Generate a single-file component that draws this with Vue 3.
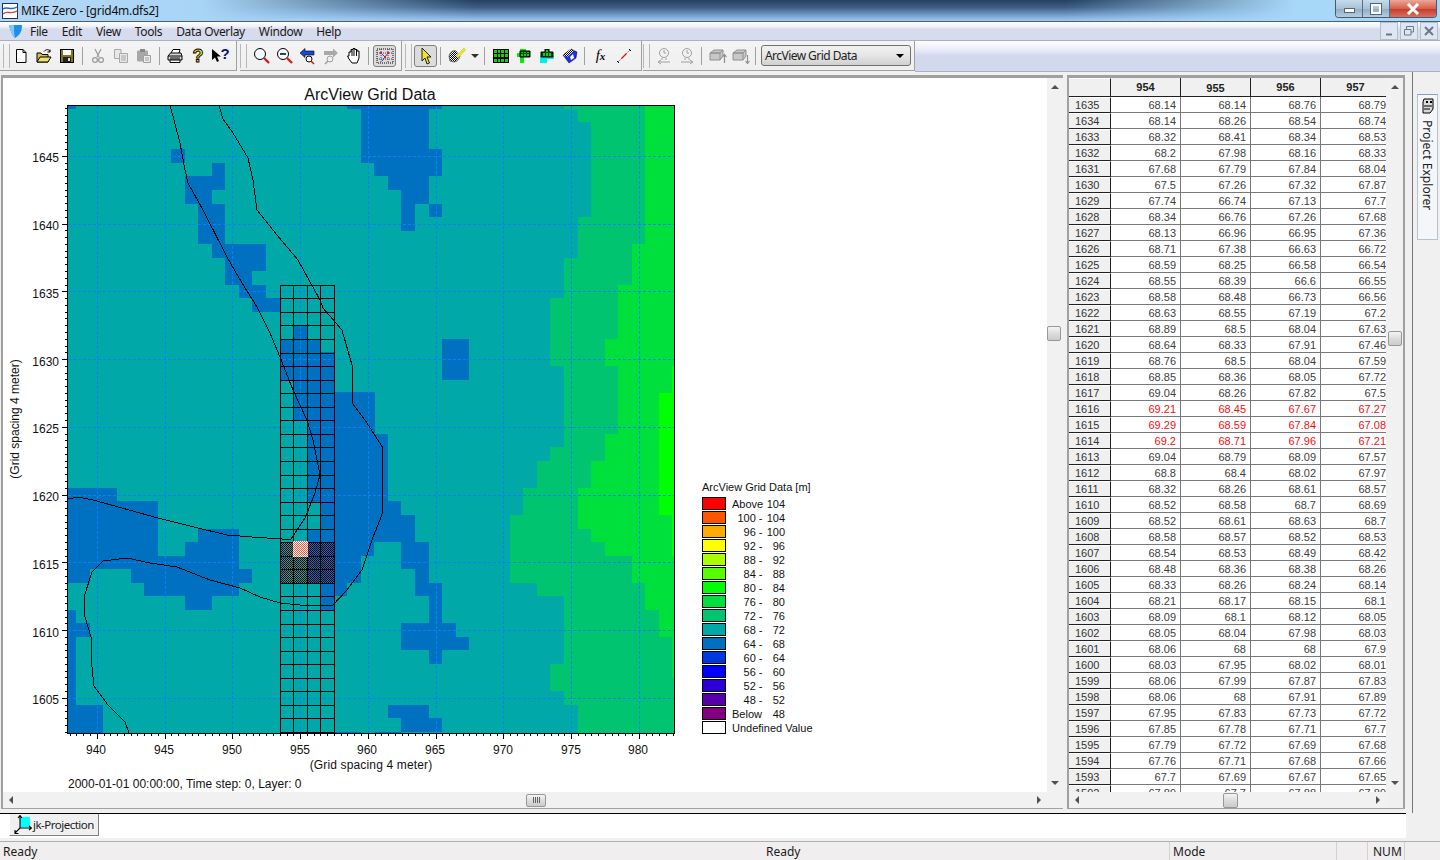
<template>
  <div class="app">
    <div class="titlebar">
      <svg class="app-icon" width="16" height="16" viewBox="0 0 16 16">
        <rect x="0.5" y="0.5" width="15" height="15" fill="#fff" stroke="#1c2f7a" />
        <path d="M1 6 C5 3 9 8 15 4" fill="none" stroke="#2a62c8" stroke-width="1.4" />
        <path d="M1 11 C5 7 9 12 15 8" fill="none" stroke="#d8442c" stroke-width="1.4" />
      </svg>
      <span class="title-text">MIKE Zero - [grid4m.dfs2]</span>
      <div class="win-btns">
        <div class="win-btn"><i class="min-glyph"></i></div>
        <div class="win-btn"><i class="max-glyph"></i></div>
        <div class="win-btn close">
          <svg width="14" height="12" viewBox="0 0 14 12"><path d="M2 1 L12 11 M12 1 L2 11" stroke="#fff" stroke-width="3" /></svg>
        </div>
      </div>
    </div>

    <div class="menubar">
      <svg class="menu-logo" width="15" height="14" viewBox="0 0 15 14">
        <path d="M1 1 L14 1 C14 7 12 11 7 14 C4 11 2 6 1 1 Z" fill="#1f8fe8" />
        <path d="M1 1 L6 1 C6 6 6 10 7 14 C4 11 2 6 1 1 Z" fill="#7fc8f8" />
      </svg>
      <span v-for="m in menus" :key="m" class="menu-item">{{ m }}</span>
      <div class="mdi-btns">
        <div class="mdi-btn"><svg width="10" height="10" viewBox="0 0 10 10"><path d="M2 8.5 H8" stroke="#66788c" stroke-width="2" /></svg></div>
        <div class="mdi-btn"><svg width="12" height="10" viewBox="0 0 12 10"><path d="M3.5 3 V0.5 H10.5 V6 H8 M1.5 3.5 H8 V9 H1.5 Z" fill="none" stroke="#66788c" /></svg></div>
        <div class="mdi-btn"><svg width="10" height="10" viewBox="0 0 10 10"><path d="M1 1 L9 9 M9 1 L1 9" stroke="#66788c" stroke-width="2" /></svg></div>
      </div>
    </div>

    <div class="toolbar">
      <div class="band band1">
        <i class="grip"></i>
        <div class="tb">
          <svg width="16" height="16" viewBox="0 0 16 16"><path d="M3.5 1.5 H10 L13 4.5 V14.5 H3.5 Z" fill="#fff" stroke="#000" /><path d="M10 1.5 V4.5 H13" fill="none" stroke="#000" /></svg>
        </div>
        <div class="tb">
          <svg width="16" height="16" viewBox="0 0 16 16"><path d="M1 5 H5 L6 6.5 H12 V14 H1 Z" fill="#d8c040" stroke="#000" /><path d="M1 14 L4 9 H15 L12 14 Z" fill="#f0e070" stroke="#000" /><path d="M8 3.5 C10 1 13 1 14 3.5 M14 1.5 V4 H11.5" fill="none" stroke="#000" /></svg>
        </div>
        <div class="tb">
          <svg width="16" height="16" viewBox="0 0 16 16"><rect x="1.5" y="1.5" width="13" height="13" fill="#807820" stroke="#000" /><rect x="4" y="2" width="8" height="5" fill="#fff" /><rect x="4" y="9" width="8" height="5" fill="#222" /><rect x="9" y="10" width="2" height="3" fill="#d8d8d8" /></svg>
        </div>
        <i class="sep"></i>
        <div class="tb">
          <svg width="16" height="16" viewBox="0 0 16 16"><path d="M5 1 L9 9 M11 1 L7 9" stroke="#9a9a9a" stroke-width="1.2" fill="none" /><circle cx="5" cy="12" r="2.4" fill="none" stroke="#9a9a9a" stroke-width="1.2" /><circle cx="11" cy="12" r="2.4" fill="none" stroke="#9a9a9a" stroke-width="1.2" /></svg>
        </div>
        <div class="tb">
          <svg width="16" height="16" viewBox="0 0 16 16"><path d="M1.5 1.5 H8 V10.5 H1.5 Z" fill="#e8e8e8" stroke="#a8a8a8" /><path d="M6.5 5.5 H14.5 V14.5 H6.5 Z" fill="#e8e8e8" stroke="#a8a8a8" /><path d="M8 8 H13 M8 10 H13 M8 12 H13" stroke="#a8a8a8" /></svg>
        </div>
        <div class="tb">
          <svg width="16" height="16" viewBox="0 0 16 16"><rect x="1" y="2.5" width="11" height="11" rx="1" fill="#a8a8a8" /><rect x="4" y="1" width="5" height="3" fill="#888" /><path d="M7.5 7.5 H14.5 V14.5 H7.5 Z" fill="#ececec" stroke="#a0a0a0" /><path d="M9 10 H13 M9 12 H13" stroke="#a0a0a0" /></svg>
        </div>
        <i class="sep"></i>
        <div class="tb">
          <svg width="16" height="16" viewBox="0 0 16 16"><path d="M4 5 L6 1.5 H13 L12 5" fill="#fff" stroke="#000" /><path d="M1 8 L3.5 5 H14 L15 8 V12 H1 Z" fill="#d8d8d8" stroke="#000" /><path d="M1 8 H15 M3 10 H13" stroke="#000" /><path d="M3 12 H13 V14.5 H3 Z" fill="#fff" stroke="#000" /></svg>
        </div>
        <div class="tb">
          <svg width="16" height="18" viewBox="0 0 16 18"><text x="8" y="15" text-anchor="middle" class="q-yellow">?</text></svg>
        </div>
        <div class="tb">
          <svg width="20" height="17" viewBox="0 0 20 17"><path d="M1 2 V13 L4 10.5 L6 15 L8 14 L6 9.5 H10 Z" fill="#000" /><text x="14" y="12" text-anchor="middle" class="q-navy">?</text></svg>
        </div>
      </div>

      <div class="band band2">
        <i class="grip"></i>
        <div class="tb">
          <svg width="18" height="18" viewBox="0 0 18 18"><circle cx="7" cy="7" r="5.5" fill="#f4fbff" stroke="#000" /><path d="M11 11 L16 16" stroke="#d02020" stroke-width="2.4" /></svg>
        </div>
        <div class="tb">
          <svg width="18" height="18" viewBox="0 0 18 18"><circle cx="7" cy="7" r="5.5" fill="#f4fbff" stroke="#000" /><path d="M4 7 H10" stroke="#000" stroke-width="1.5" /><path d="M11 11 L16 16" stroke="#d02020" stroke-width="2.4" /></svg>
        </div>
        <div class="tb">
          <svg width="18" height="18" viewBox="0 0 18 18"><path d="M1 6 L6 1.5 V4 H15 V8 H6 V10.5 Z" fill="#1848d8" stroke="#000" stroke-width="0.6" /><circle cx="10" cy="12" r="3" fill="#fff" stroke="#000" /><path d="M12 14 L15 17" stroke="#d02020" stroke-width="1.6" /></svg>
        </div>
        <div class="tb">
          <svg width="18" height="18" viewBox="0 0 18 18"><path d="M16 6 L11 1.5 V4 H2 V8 H11 V10.5 Z" fill="#a8a8a8" /><circle cx="8" cy="12" r="3" fill="#eee" stroke="#a0a0a0" /><path d="M6 14 L3 17" stroke="#a0a0a0" stroke-width="1.6" /></svg>
        </div>
        <div class="tb">
          <svg width="16" height="18" viewBox="0 0 16 18"><path d="M3 9 V5 H5 V2.5 H7 V1.5 H9 V2.5 H11 V4 H13 V11 L11 16 H6 L3 12 L1.5 9 Z" fill="#fff" stroke="#000" /><path d="M6 3 V9 M8 2 V9 M10.5 3 V9" stroke="#000" /></svg>
        </div>
        <i class="sep"></i>
        <div class="tb active">
          <svg width="18" height="16" viewBox="0 0 18 16"><rect x="1" y="1" width="16" height="14" fill="none" stroke="#000" stroke-dasharray="1 1" /><path d="M5 1 V15 M12 1 V15 M1 5 H17 M1 11 H17" stroke="#404040" stroke-dasharray="1 1" /><path d="M5 5 L9 9 L12 5 M9 9 L6 13" fill="none" stroke="#2040d0" /><path d="M4 4 h2 v2 h-2z M11 4 h2 v2 h-2z M8 8 h2 v2 h-2z" fill="#d82020" /></svg>
        </div>
      </div>

      <div class="band band3">
        <i class="grip"></i>
        <div class="tb active">
          <svg width="16" height="18" viewBox="0 0 16 18"><path d="M4 1 L13 10 H9 L11.5 16 L9 17 L7 11 L4 14 Z" fill="#f0e818" stroke="#202020" /></svg>
        </div>
        <i class="sep"></i>
        <div class="tb">
          <svg width="18" height="18" viewBox="0 0 18 18"><path d="M1 9 C2 5 5 3 8 4 L12 9 C11 13 8 15 6 15 L2 14 Z" fill="url(#dots)" stroke="#505050" stroke-width="0.8" /><path d="M8 9 L16 1 L17.5 3 L10 11 Z" fill="#f0e030" stroke="#c8c040" stroke-width="0.6" /></svg>
        </div>
        <div class="drop"><i class="caret"></i></div>
        <i class="sep"></i>
        <div class="tb">
          <svg width="16" height="14" viewBox="0 0 16 14"><rect width="16" height="14" fill="#000" /><path d="M1 1h3v3H1z M5 1h2v3H5z M8 1h3v3H8z M12 1h3v3h-3z M1 5h3v3H1z M5 5h2v3H5z M8 5h3v3H8z M12 5h3v3h-3z M1 10h3v3H1z M5 10h2v3H5z M8 10h3v3H8z M12 10h3v3h-3z" fill="#10d010" /></svg>
        </div>
        <div class="tb">
          <svg width="14" height="14" viewBox="0 0 14 14"><path d="M3 0 H9 V4 H0 V8 H3 V14 H7 V8 H3 Z" fill="#00f000" /><path d="M3 2 H13 V8 H3 Z" fill="#004800" stroke="#000" /><path d="M4 3 h2 v1 h-2z M7 3 h2 v1 h-2z M10 3 h2 v1 h-2z M4 5 h2 v2 h-2z M7 5 h2 v2 h-2z M10 5 h2 v2 h-2z" fill="#10c810" /></svg>
        </div>
        <div class="tb">
          <svg width="14" height="14" viewBox="0 0 14 14"><path d="M0 7 H14 V10 H7 V14 H0 Z" fill="#00f0f0" /><path d="M5 0 H9 V3 H13 V8 H1 V3 H5 Z" fill="#004800" stroke="#000" /><path d="M3 4 h2 v3 h-2z M6 1 h2 v2 h-2z M6 4 h2 v3 h-2z M9 4 h2 v3 h-2z" fill="#10c810" /></svg>
        </div>
        <div class="tb">
          <svg width="16" height="16" viewBox="0 0 16 16"><path d="M1 7 L9 1 L15 4 L14 10 L7 15 Z" fill="#2030e8" stroke="#000" stroke-width="0.5" /><path d="M1 7 L9 1 L12 3 L5 9 Z" fill="url(#dots)" /><path d="M8 9 L11 6 L12 10 L9 12 Z" fill="#fff" /></svg>
        </div>
        <i class="sep"></i>
        <div class="tb"><span class="fx"><i>f</i><i class="fx-x">x</i></span></div>
        <div class="tb">
          <svg width="16" height="16" viewBox="0 0 16 16"><path d="M2 14 L14 2" stroke="#404040" stroke-dasharray="1 1" /><path d="M5.5 10.5 L10.5 5.5" stroke="#e01010" stroke-width="1.2" /><path d="M1 13 L3 15 M13 1 L15 3" stroke="#000" /></svg>
        </div>
      </div>

      <div class="band band4">
        <i class="grip"></i>
        <div class="tb">
          <svg width="16" height="18" viewBox="0 0 16 18"><circle cx="8" cy="6" r="4.5" fill="none" stroke="#a0a0a0" /><path d="M8 3 V6 H10 M6 11 V13 M10 11 V13 M2 15 H14 M5 13 L2 15 L5 17" fill="none" stroke="#a0a0a0" /></svg>
        </div>
        <div class="tb">
          <svg width="16" height="18" viewBox="0 0 16 18"><circle cx="8" cy="6" r="4.5" fill="none" stroke="#a0a0a0" /><path d="M8 3 V6 H10 M6 11 V13 M10 11 V13 M2 15 H14 M11 13 L14 15 L11 17" fill="none" stroke="#a0a0a0" /></svg>
        </div>
        <i class="sep"></i>
        <div class="tb">
          <svg width="18" height="16" viewBox="0 0 18 16"><path d="M1 5 L5 2 H14 L11 5 Z M1 5 H11 V12 H1 Z M11 5 L14 2 V8 L11 12" fill="#c8c8c8" stroke="#909090" /><path d="M15.5 15 V7 M13.5 9 L15.5 6.5 L17.5 9" fill="none" stroke="#909090" stroke-width="1.2" /></svg>
        </div>
        <div class="tb">
          <svg width="18" height="16" viewBox="0 0 18 16"><path d="M1 5 L5 2 H14 L11 5 Z M1 5 H11 V12 H1 Z M11 5 L14 2 V8 L11 12" fill="#c8c8c8" stroke="#909090" /><path d="M15.5 7 V15 M13.5 13 L15.5 15.5 L17.5 13" fill="none" stroke="#909090" stroke-width="1.2" /></svg>
        </div>
        <i class="sep"></i>
        <div class="combo">
          <span>ArcView Grid Data</span>
          <i class="caret dark"></i>
        </div>
      </div>
      <div class="band-rest"></div>
    </div>

    <div class="workspace">
      <div class="pane left-pane">
        <div class="pane-top">
          <svg class="canvas" width="1044" height="714" viewBox="3 78 1044 714">
            <defs>
              <pattern id="dots" width="2" height="2" patternUnits="userSpaceOnUse">
                <rect width="2" height="2" fill="#fff" />
                <rect width="1" height="1" fill="#000" />
                <rect x="1" y="1" width="1" height="1" fill="#000" />
              </pattern>
              <pattern id="shadeTeal" width="2" height="2" patternUnits="userSpaceOnUse">
                <rect width="2" height="2" fill="#00a8a8" />
                <rect width="1" height="1" fill="#000" />
                <rect x="1" y="1" width="1" height="1" fill="#000" />
              </pattern>
              <pattern id="shadeBlue" width="2" height="2" patternUnits="userSpaceOnUse">
                <rect width="2" height="2" fill="#0070c0" />
                <rect width="1" height="1" fill="#000" />
                <rect x="1" y="1" width="1" height="1" fill="#000" />
              </pattern>
              <pattern id="shadeSel" width="2" height="2" patternUnits="userSpaceOnUse">
                <rect width="2" height="2" fill="#fff" />
                <rect width="1" height="1" fill="#f05a40" />
                <rect x="1" y="1" width="1" height="1" fill="#f05a40" />
              </pattern>
            </defs>

            <text x="370" y="100" class="chart-title" text-anchor="middle">ArcView Grid Data</text>

            <g shape-rendering="crispEdges">
              <rect x="68" y="105" width="607" height="628" fill="#00a8a8" />
              <rect v-for="(r, i) in blueCells" :key="'b' + i" :x="r[0]" :y="r[1]" :width="r[2] - r[0]" :height="r[3] - r[1]" fill="#0070c0" />
              <rect v-for="(s, i) in greenSteps" :key="'g' + i" :x="s[2]" :y="s[0]" :width="675 - s[2]" :height="s[1] - s[0]" fill="#00c470" />
              <rect v-for="(s, i) in brightSteps" :key="'h' + i" :x="s[2]" :y="s[0]" :width="675 - s[2]" :height="s[1] - s[0]" fill="#00e03c" />
              <rect v-for="(s, i) in limeSteps" :key="'l' + i" :x="s[2]" :y="s[0]" :width="675 - s[2]" :height="s[1] - s[0]" fill="#00ff00" />

              <line v-for="x in xMajor" :key="'dx' + x" :x1="x" :x2="x" y1="106" y2="733" class="dash" />
              <line v-for="y in yMajor" :key="'dy' + y" x1="68" x2="675" :y1="y" :y2="y" class="dash" />

              <rect x="281" y="542" width="26" height="42" fill="url(#shadeTeal)" />
              <rect x="307" y="542" width="28" height="42" fill="url(#shadeBlue)" />
              <rect x="293" y="541" width="15" height="16" fill="url(#shadeSel)" />

              <line v-for="x in gridCols" :key="'cx' + x" :x1="x" :x2="x" y1="285" y2="733" stroke="#000" />
              <line v-for="y in gridRows" :key="'cy' + y" x1="280" x2="335" :y1="y" :y2="y" stroke="#000" />
              <rect x="293" y="541" width="15" height="16" fill="url(#shadeSel)" />

              <rect x="67.5" y="105.5" width="607" height="628" fill="none" stroke="#000" />
              <line v-for="t in xTicks" :key="'tx' + t.p" :x1="t.p" :x2="t.p" y1="733" :y2="t.major ? 739 : 736" stroke="#000" />
              <line v-for="t in yTicks" :key="'ty' + t.p" :x2="68" :x1="t.major ? 62 : 65" :y1="t.p" :y2="t.p" stroke="#000" />

              <polyline :points="river1" class="river" />
              <polyline :points="river2" class="river" />
            </g>

            <text v-for="l in xLabels" :key="'xl' + l.v" :x="l.p" y="754" text-anchor="middle" class="axis">{{ l.v }}</text>
            <text v-for="l in yLabels" :key="'yl' + l.v" x="59" :y="l.p + 6" text-anchor="end" class="axis">{{ l.v }}</text>
            <text x="371" y="769" text-anchor="middle" class="axis wide">(Grid spacing 4 meter)</text>
            <text transform="translate(19 419) rotate(-90)" text-anchor="middle" class="axis">(Grid spacing 4 meter)</text>
            <text x="68" y="788" class="axis">2000-01-01 00:00:00, Time step: 0, Layer: 0</text>

            <text x="702" y="491" class="legend">ArcView Grid Data [m]</text>
            <g v-for="(l, i) in legend" :key="l.color">
              <rect x="702.5" :y="497.5 + i * 14" width="23" height="12" :fill="l.color" stroke="#000" />
              <text v-if="l.left" :x="l.anchor === 'end' ? 762.5 : 732" :y="508 + i * 14" :text-anchor="l.anchor" class="legend">{{ l.left }}</text>
              <text v-if="l.right" x="785" :y="508 + i * 14" text-anchor="end" class="legend">{{ l.right }}</text>
            </g>
            <text x="732" y="732" class="legend">Undefined Value</text>
          </svg>
          <div class="vscroll">
            <i class="arrow up"></i>
            <div class="vtrack left-vtrack"><i class="thumb vthumb"></i></div>
            <i class="arrow down"></i>
          </div>
        </div>
        <div class="hscroll left-h">
          <i class="arrow lt"></i>
          <div class="htrack left-htrack"><i class="thumb hthumb"></i></div>
          <i class="arrow rt"></i>
        </div>
      </div>

      <div class="pane right-pane">
        <div class="pane-top">
          <div class="sheet">
            <div class="row head">
              <div class="rowhead corner"></div>
              <div v-for="c in columns" :key="c" class="cell colhead" :class="{ low: c === 955 }">{{ c }}</div>
            </div>
            <div v-for="r in rows" :key="r.id" class="row" :class="{ picked: r.picked }">
              <div class="rowhead">{{ r.id }}</div>
              <div v-for="(v, i) in r.vals" :key="i" class="cell">{{ v }}</div>
            </div>
          </div>
          <div class="vscroll right-v">
            <i class="arrow up"></i>
            <div class="vtrack right-vtrack"><i class="thumb vthumb"></i></div>
            <i class="arrow down"></i>
          </div>
        </div>
        <div class="hscroll right-h">
          <i class="arrow lt"></i>
          <div class="htrack right-htrack"><i class="thumb hthumb tall"></i></div>
          <i class="arrow rt"></i>
        </div>
      </div>

      <div class="side">
        <div class="side-tab">
          <svg width="14" height="16" viewBox="0 0 14 16"><path d="M3 1 H12 V11 L9 15 H2 V4 Z" fill="#d8d8d8" stroke="#000" /><rect x="5" y="3" width="2" height="2" fill="#000" /><rect x="9" y="3" width="2" height="2" fill="#000" /><path d="M3 8 H11 M3 11 H9" stroke="#000" /></svg>
          <span class="side-text">Project Explorer</span>
        </div>
      </div>
    </div>

    <div class="tabbar">
      <div class="doc-tab">
        <svg width="18" height="20" viewBox="0 0 18 20">
          <rect x="6" y="2" width="10" height="10" fill="#00ffff" />
          <path d="M6 1 V13 M4 3 L6 0.5 L8 3 M6 13 H17 M15 11 L17.5 13 L15 15 M6 13 L1 18 M1 15 V18.5 H4.5" fill="none" stroke="#000" stroke-width="1.1" />
        </svg>
        <span>jk-Projection</span>
      </div>
    </div>

    <div class="statusbar">
      <span class="st st-a">Ready</span>
      <span class="st st-b">Ready</span>
      <span class="st st-c">Mode</span>
      <span class="st st-d"></span>
      <span class="st st-e">NUM</span>
      <span class="st st-f"></span>
    </div>
  </div>
</template>

<script setup>
const menus = ['File', 'Edit', 'View', 'Tools', 'Data Overlay', 'Window', 'Help']
const columns = [954, 955, 956, 957]

const rawRows = `1635 68.14 68.14 68.76 68.79
1634 68.14 68.26 68.54 68.74
1633 68.32 68.41 68.34 68.53
1632 68.2 67.98 68.16 68.33
1631 67.68 67.79 67.84 68.04
1630 67.5 67.26 67.32 67.87
1629 67.74 66.74 67.13 67.7
1628 68.34 66.76 67.26 67.68
1627 68.13 66.96 66.95 67.36
1626 68.71 67.38 66.63 66.72
1625 68.59 68.25 66.58 66.54
1624 68.55 68.39 66.6 66.55
1623 68.58 68.48 66.73 66.56
1622 68.63 68.55 67.19 67.2
1621 68.89 68.5 68.04 67.63
1620 68.64 68.33 67.91 67.46
1619 68.76 68.5 68.04 67.59
1618 68.85 68.36 68.05 67.72
1617 69.04 68.26 67.82 67.5
1616 69.21 68.45 67.67 67.27
1615 69.29 68.59 67.84 67.08
1614 69.2 68.71 67.96 67.21
1613 69.04 68.79 68.09 67.57
1612 68.8 68.4 68.02 67.97
1611 68.32 68.26 68.61 68.57
1610 68.52 68.58 68.7 68.69
1609 68.52 68.61 68.63 68.7
1608 68.58 68.57 68.52 68.53
1607 68.54 68.53 68.49 68.42
1606 68.48 68.36 68.38 68.26
1605 68.33 68.26 68.24 68.14
1604 68.21 68.17 68.15 68.1
1603 68.09 68.1 68.12 68.05
1602 68.05 68.04 67.98 68.03
1601 68.06 68 68 67.9
1600 68.03 67.95 68.02 68.01
1599 68.06 67.99 67.87 67.83
1598 68.06 68 67.91 67.89
1597 67.95 67.83 67.73 67.72
1596 67.85 67.78 67.71 67.7
1595 67.79 67.72 67.69 67.68
1594 67.76 67.71 67.68 67.66
1593 67.7 67.69 67.67 67.65
1592 67.89 67.7 67.88 67.89`

const rows = rawRows.split('\n').map((line) => {
  const parts = line.split(' ')
  const id = Number(parts[0])
  return { id, vals: parts.slice(1), picked: id >= 1614 && id <= 1616 }
})

// cells of the 64-68 band, x0 y0 x1 y1 in screen pixels
const blueCells = [
  [68, 105, 76, 109], [171, 149, 185, 163], [212, 163, 225, 176], [185, 176, 225, 190],
  [185, 190, 212, 204], [198, 204, 225, 244], [212, 244, 266, 258], [225, 258, 266, 271],
  [225, 271, 252, 285], [239, 285, 266, 298], [252, 298, 281, 312],
  [294, 325, 307, 339], [281, 339, 321, 352], [281, 352, 335, 380], [294, 380, 335, 393],
  [294, 393, 375, 420], [307, 420, 374, 434], [307, 434, 335, 502], [321, 502, 335, 529],
  [307, 529, 335, 542], [321, 584, 335, 610],
  [335, 392, 375, 434], [335, 434, 388, 501], [335, 501, 401, 515], [335, 515, 415, 542],
  [335, 542, 374, 556], [335, 556, 361, 583], [335, 583, 347, 596],
  [401, 542, 429, 569], [415, 569, 429, 583], [415, 583, 442, 596], [429, 596, 442, 623],
  [401, 623, 456, 637], [401, 637, 469, 650], [429, 650, 442, 664],
  [388, 705, 429, 718], [401, 718, 442, 732], [374, 732, 401, 733], [335, 732, 361, 733],
  [347, 105, 442, 109], [361, 109, 429, 149], [361, 149, 442, 163], [374, 163, 442, 176],
  [388, 176, 429, 190], [401, 190, 429, 204], [401, 204, 415, 231], [429, 204, 442, 217],
  [442, 339, 469, 380],
  [68, 488, 117, 501], [68, 501, 158, 556], [198, 529, 239, 542], [185, 542, 239, 556],
  [68, 556, 239, 569], [68, 569, 90, 583], [131, 569, 252, 583], [144, 583, 239, 596],
  [185, 596, 212, 610], [68, 610, 76, 707], [68, 623, 90, 637], [68, 705, 103, 733]
]

// y0 y1 x: everything right of x belongs to the band
const greenSteps = [
  [105, 109, 564], [109, 122, 578], [122, 217, 591], [217, 258, 578], [258, 298, 564],
  [298, 366, 550], [366, 447, 564], [447, 461, 550], [461, 488, 537], [488, 515, 523],
  [515, 583, 510], [583, 596, 537], [596, 664, 564], [664, 691, 550], [691, 705, 564],
  [705, 733, 578]
]
const brightSteps = [
  [105, 244, 645], [244, 285, 632], [285, 339, 618], [339, 366, 605], [366, 434, 618],
  [434, 461, 605], [461, 488, 591], [488, 529, 578], [529, 542, 591], [542, 556, 605],
  [556, 583, 632], [583, 610, 645], [610, 637, 659], [637, 678, 672]
]
const limeSteps = [[366, 393, 672], [393, 515, 659], [515, 556, 672]]

const xAt = (v) => 97.3 + (v - 940) * 13.55
const yAt = (v) => 156.3 + (1645 - v) * 13.55

const xMajor = [940, 945, 950, 955, 960, 965, 970, 975, 980].map((v) => Math.floor(xAt(v)) + 0.5)
const yMajor = [1645, 1640, 1635, 1630, 1625, 1620, 1615, 1610, 1605].map((v) => Math.floor(yAt(v)) + 0.5)
const xLabels = [940, 945, 950, 955, 960, 965, 970, 975, 980].map((v) => ({ v, p: Math.round(xAt(v)) - 1 }))
const yLabels = [1645, 1640, 1635, 1630, 1625, 1620, 1615, 1610, 1605].map((v) => ({ v, p: Math.round(yAt(v)) }))

const gridCols = [280.5, 293.5, 307.5, 320.5, 334.5]
const gridRows = Array.from({ length: 34 }, (_, i) => Math.floor(285.3 + i * 13.55) + 0.5)

const xTicks = []
for (let i = -4; i <= 85; i++) {
  const p = Math.floor(xAt(940) + (i * 13.55) / 2) + 0.5
  if (p > 68 && p < 675) xTicks.push({ p, major: i % 10 === 0 })
}
const yTicks = []
for (let i = -8; i <= 85; i++) {
  const p = Math.floor(yAt(1645) + (i * 13.55) / 2) + 0.5
  if (p > 106 && p < 733) yTicks.push({ p, major: i % 10 === 0 })
}

const river1 = '170,105 180,143 185,170 188,183 203,210 227,257 242,283 257,307 270,333 280,357 293,390 307,420 313,440 320,475 315,493 305,518 291,539 282,539 252,537 227,535 198,528 158,518 93,500 78,497 68,499'
const river2 = '219,105 223,119 233,133 248,158 253,180 257,210 277,235 298,260 320,300 323,308 342,330 352,365 352,403 365,420 383,448 382,515 373,537 362,570 347,590 333,605 300,605 280,603 260,597 240,588 210,580 177,567 150,563 127,558 103,561 92,572 84,597 85,617 91,637 92,667 94,686 108,705 125,722 129,733'

const legend = [
  { color: '#ff0000', left: 'Above', anchor: 'start', right: '104' },
  { color: '#ff5500', left: '100 -', anchor: 'end', right: '104' },
  { color: '#ffaa00', left: '96 -', anchor: 'end', right: '100' },
  { color: '#ffff00', left: '92 -', anchor: 'end', right: '96' },
  { color: '#aaff00', left: '88 -', anchor: 'end', right: '92' },
  { color: '#55ff00', left: '84 -', anchor: 'end', right: '88' },
  { color: '#00ff00', left: '80 -', anchor: 'end', right: '84' },
  { color: '#00e03c', left: '76 -', anchor: 'end', right: '80' },
  { color: '#00c470', left: '72 -', anchor: 'end', right: '76' },
  { color: '#00a8a8', left: '68 -', anchor: 'end', right: '72' },
  { color: '#0070c0', left: '64 -', anchor: 'end', right: '68' },
  { color: '#0038e0', left: '60 -', anchor: 'end', right: '64' },
  { color: '#0000ff', left: '56 -', anchor: 'end', right: '60' },
  { color: '#2a00d4', left: '52 -', anchor: 'end', right: '56' },
  { color: '#5500aa', left: '48 -', anchor: 'end', right: '52' },
  { color: '#800080', left: 'Below', anchor: 'start', right: '48' },
  { color: '#ffffff', left: '', anchor: 'start', right: '' }
]
</script>

<style>
html, body {
  margin: 0;
  overflow: hidden;
  background: #f0f0f0;
}
</style>

<style scoped>
.app {
  width: 1440px;
  height: 860px;
  display: flex;
  flex-direction: column;
  overflow: hidden;
  font-family: "Noto Sans", "Liberation Sans", sans-serif;
  font-size: 12px;
  color: #1a1a1a;
}

.titlebar {
  height: 21px;
  flex: none;
  display: flex;
  align-items: center;
  border-bottom: 1px solid #4d5d70;
  background:
    linear-gradient(90deg, #b4d8f4 0, #a8d4f6 14%, rgba(168, 212, 246, 0) 33%, rgba(168, 212, 246, 0) 74%, rgba(168, 216, 248, 1) 90%),
    linear-gradient(180deg, #24405f 0, #3b5d84 35%, #7fa9d8 80%, #a2c6ea 100%);
}
.app-icon {
  margin: 1px 0 0 2px;
}
.title-text {
  margin-left: 3px;
  font-size: 12px;
  letter-spacing: -0.25px;
  color: #111;
}
.win-btns {
  margin-left: auto;
  margin-right: 3px;
  align-self: flex-start;
  display: flex;
  height: 17px;
  border: 1px solid #4a5a6e;
  border-top: none;
  border-radius: 0 0 4px 4px;
  overflow: hidden;
}
.win-btn {
  width: 26px;
  display: flex;
  align-items: center;
  justify-content: center;
  border-right: 1px solid #5a6c80;
  background: linear-gradient(180deg, #c6dbec 0, #a8c2d8 50%, #8fabc4 51%, #b5cde0 100%);
}
.win-btn.close {
  width: 46px;
  border-right: none;
  background: linear-gradient(180deg, #e8a89a 0, #d8604c 50%, #c23a28 51%, #d87060 100%);
}
.min-glyph {
  display: block;
  width: 9px;
  height: 3px;
  margin-top: 3px;
  background: #fff;
  border: 1px solid #55677a;
}
.max-glyph {
  display: block;
  width: 6px;
  height: 6px;
  border: 2px solid #fff;
  outline: 1px solid #55677a;
}

.menubar {
  height: 18px;
  flex: none;
  display: flex;
  align-items: center;
  border-bottom: 1px solid #a9b2c0;
  background: linear-gradient(180deg, #ffffff 0, #eef1f8 25%, #d6dcee 40%, #d6dcee 100%);
}
.menu-logo {
  margin-left: 8px;
  margin-right: 7px;
}
.menu-item {
  margin-right: 14px;
  font-size: 12px;
  letter-spacing: -0.35px;
}
.mdi-btns {
  margin-left: auto;
  display: flex;
  gap: 2px;
  margin-right: 2px;
}
.mdi-btn {
  width: 16px;
  height: 16px;
  display: flex;
  align-items: center;
  justify-content: center;
  border: 1px solid #b4bdcb;
  background: #dfe5f2;
}

.toolbar {
  height: 31px;
  flex: none;
  display: flex;
  background: #f0f0f0;
}
.band {
  box-sizing: border-box;
  height: 30px;
  display: flex;
  align-items: center;
  border-bottom: 1px solid #a0a0a0;
  border-right: 1px solid #a0a0a0;
  background: linear-gradient(180deg, #f4f4f4 0, #efefef 100%);
}
.band1 { width: 237px; padding-left: 2.5px; }
.band2 { width: 162px; margin-left: 3px; }
.band3 { width: 237px; margin-left: 3px; }
.band4 { width: 272px; margin-left: 1px; }
.band-rest {
  flex: 1;
  height: 30px;
  background: linear-gradient(180deg, #fdfdff 0, #e8ecf6 30%, #d2d9ec 50%, #d2d9ec 100%);
  border-bottom: 1px solid #a9b2c0;
}
.grip {
  flex: none;
  width: 7px;
  height: 24px;
  border-left: 1px solid #b8b8b8;
  border-right: 1px solid #b8b8b8;
  box-sizing: border-box;
}
.band2 .grip, .band3 .grip, .band4 .grip {
  margin-right: 2px;
}
.band2 .tb:first-of-type { margin-left: 1px; }
.tb {
  flex: none;
  width: 23px;
  height: 22px;
  box-sizing: border-box;
  display: flex;
  align-items: center;
  justify-content: center;
}
.tb.active {
  border: 1px solid #808080;
  border-radius: 3px;
  background: #dcdcdc;
}
.sep {
  flex: none;
  width: 8px;
  height: 18px;
  box-sizing: border-box;
  border-left: 1px solid #a0a0a0;
  transform: translateX(3px);
}
.drop {
  flex: none;
  width: 13px;
  height: 22px;
  display: flex;
  align-items: center;
  justify-content: center;
}
.caret {
  display: block;
  width: 0;
  height: 0;
  border-left: 4px solid transparent;
  border-right: 4px solid transparent;
  border-top: 4px solid #303030;
}
.combo {
  flex: none;
  width: 150px;
  height: 21px;
  box-sizing: border-box;
  margin-left: 1px;
  padding: 0 6px 0 3px;
  display: flex;
  align-items: center;
  justify-content: space-between;
  border: 1px solid #707070;
  border-radius: 3px;
  background: linear-gradient(180deg, #f2f2f2 0, #e6e6e6 50%, #d0d0d0 100%);
  font-size: 12px;
  letter-spacing: -0.55px;
  color: #222;
}
.caret.dark {
  border-top-color: #000;
}
.q-yellow {
  font: bold 18px "Liberation Sans", sans-serif;
  fill: #f0e020;
  stroke: #000;
  stroke-width: 0.9px;
}
.q-navy {
  font: bold 15px "Liberation Sans", sans-serif;
  fill: #10107a;
}
.fx {
  font: italic 15px "Liberation Serif", serif;
  color: #000;
}
.fx i {
  font-style: italic;
}
.fx-x {
  font-size: 11px;
  font-weight: bold;
}

.workspace {
  height: 741px;
  flex: none;
  box-sizing: border-box;
  display: flex;
  padding: 3px 0 4px 1px;
  background: #f0f0f0;
}
.pane {
  box-sizing: border-box;
  display: flex;
  flex-direction: column;
  border: 0 solid #a0a0a0;
  border-width: 3px 0 1px 2px;
}
.left-pane {
  width: 1062px;
}
.right-pane {
  width: 338px;
  margin-left: 4px;
  border-right-width: 2px;
}
.pane-top {
  height: 714px;
  display: flex;
  flex: none;
}
.canvas {
  display: block;
  flex: none;
  background: #fff;
}
.vscroll {
  width: 16px;
  flex: none;
  display: flex;
  flex-direction: column;
  align-items: center;
  background: #f1f1f1;
}
.right-v {
  width: 17px;
}
.vtrack {
  flex: 1;
  width: 100%;
  box-sizing: border-box;
}
.left-vtrack { padding-top: 230px; }
.right-vtrack { padding-top: 235px; }
.vthumb {
  display: block;
  width: 14px;
  height: 15px;
}
.right-vtrack .vthumb {
  margin-left: 2px;
}
.thumb {
  box-sizing: border-box;
  border: 1px solid #979797;
  border-radius: 2px;
  background: linear-gradient(180deg, #f4f4f4 0, #dcdcdc 50%, #cbcbcb 100%);
}
.arrow {
  flex: none;
  display: block;
  width: 0;
  height: 0;
}
.arrow.up {
  margin: 7px 0;
  border-left: 4px solid transparent;
  border-right: 4px solid transparent;
  border-bottom: 4px solid #505050;
}
.arrow.down {
  margin: 7px 0;
  border-left: 4px solid transparent;
  border-right: 4px solid transparent;
  border-top: 4px solid #505050;
}
.arrow.lt {
  margin: 0 6px;
  border-top: 4px solid transparent;
  border-bottom: 4px solid transparent;
  border-right: 4px solid #505050;
}
.arrow.rt {
  margin: 0 6px;
  border-top: 4px solid transparent;
  border-bottom: 4px solid transparent;
  border-left: 4px solid #505050;
}
.hscroll {
  height: 16px;
  flex: none;
  display: flex;
  align-items: center;
  background: #f1f1f1;
}
.left-h {
  box-sizing: border-box;
  padding-right: 16px;
}
.right-h {
  width: 317px;
}
.htrack {
  flex: 1;
  height: 100%;
  box-sizing: border-box;
  display: flex;
  align-items: center;
}
.left-htrack {
  padding-left: 507px;
}
.right-htrack {
  padding-left: 138px;
}
.hthumb {
  display: block;
  width: 20px;
  height: 13px;
  background:
    repeating-linear-gradient(90deg, #606060 0 1px, transparent 1px 2px) center / 7px 6px no-repeat,
    linear-gradient(180deg, #f4f4f4 0, #dcdcdc 50%, #cbcbcb 100%);
}
.hthumb.tall {
  width: 15px;
  height: 15px;
  background: linear-gradient(180deg, #f4f4f4 0, #dcdcdc 50%, #cbcbcb 100%);
}

.sheet {
  width: 317px;
  flex: none;
  overflow: hidden;
  background: #fff;
  font-family: "Liberation Sans", Arial, sans-serif;
  font-size: 11px;
}
.row {
  display: flex;
  height: 16px;
  width: 322px;
}
.row.head {
  height: 19px;
}
.rowhead {
  flex: none;
  width: 42px;
  box-sizing: border-box;
  padding-left: 6px;
  line-height: 15px;
  background: #f0f0f0;
  border-top: 1px solid #fff;
  border-right: 1px solid #202020;
  border-bottom: 1px solid #202020;
  color: #333;
}
.cell {
  flex: none;
  width: 70px;
  box-sizing: border-box;
  padding-right: 4px;
  line-height: 17px;
  text-align: right;
  color: #404040;
  border-right: 1px solid #787878;
  border-bottom: 1px solid #787878;
}
.picked .cell {
  color: #f01010;
}
.colhead {
  padding: 0;
  text-align: center;
  font-weight: bold;
  line-height: 18px;
  color: #222;
  background: #f0f0f0;
  border-right: 1px solid #202020;
  border-bottom: 1px solid #202020;
}
.colhead.low {
  line-height: 20px;
}

.side {
  flex: 1;
  box-sizing: border-box;
  margin-left: 7px;
  margin-top: -3px;
  margin-bottom: -4px;
  border-left: 1px solid #777;
  padding: 22px 0 0 4px;
}
.side-tab {
  box-sizing: border-box;
  width: 21px;
  height: 146px;
  display: flex;
  flex-direction: column;
  align-items: center;
  padding-top: 3px;
  border: 1px solid #b6c2d0;
  border-top-color: #8aa0b8;
  background: #f4f6fa;
}
.side-text {
  margin-top: 6px;
  writing-mode: vertical-rl;
  font-size: 12px;
  letter-spacing: 0.05px;
  color: #1a1a1a;
}

.tabbar {
  height: 25px;
  flex: none;
  box-sizing: border-box;
  width: 1406px;
  padding-left: 9px;
  border-top: 1px solid #000;
  background: #fff;
}
.doc-tab {
  box-sizing: border-box;
  width: 90px;
  height: 22px;
  display: flex;
  align-items: center;
  padding-left: 4px;
  border-left: 1px solid #fff;
  border-right: 1px solid #808080;
  border-bottom: 1px solid #808080;
  background: #f0f0f0;
  font-size: 11.5px;
  letter-spacing: -0.5px;
}
.doc-tab svg {
  flex: none;
}
.doc-tab span {
  margin-left: 1px;
}

.statusbar {
  flex: 1;
  display: flex;
  box-sizing: border-box;
  border-top: 1px solid #b0b0b0;
  margin-top: 3px;
  background: #f0eeee;
  font-size: 12px;
}
.st {
  box-sizing: border-box;
  padding-left: 3px;
  line-height: 19px;
  border-right: 1px solid #d4d0d0;
}
.st-a { width: 763px; border-right: none; }
.st-b { width: 407px; }
.st-c { width: 167px; }
.st-d { width: 31px; }
.st-e { width: 37px; padding-left: 5px; }
.st-f { flex: 1; border-right: none; }

.chart-title {
  font: 16px "Liberation Sans", Arial, sans-serif;
  fill: #111;
}
.axis {
  font: 12px "Liberation Sans", Arial, sans-serif;
  fill: #111;
}
.axis.wide {
  letter-spacing: 0.15px;
}
.legend {
  font: 11px "Liberation Sans", Arial, sans-serif;
  fill: #111;
}
.dash {
  stroke: #0a80ff;
  stroke-dasharray: 3 2;
}
.river {
  fill: none;
  stroke: #000;
  stroke-width: 1;
}
</style>
